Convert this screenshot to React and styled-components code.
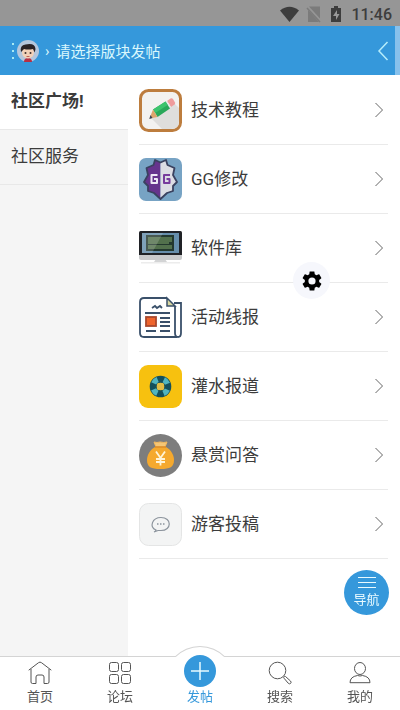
import React from "react";
import styled, { createGlobalStyle } from "styled-components";

const BLUE = "#3598db";

const boards = [
  { name: "技术教程", Icon: PencilIcon },
  { name: "GG修改", Icon: GuardianIcon },
  { name: "软件库", Icon: MonitorIcon },
  { name: "活动线报", Icon: NewspaperIcon },
  { name: "灌水报道", Icon: LifebuoyIcon },
  { name: "悬赏问答", Icon: MoneyBagIcon },
  { name: "游客投稿", Icon: ChatIcon },
];

const groups = ["社区广场!", "社区服务"];

function PencilIcon() {
  return (
    <BoardIcon viewBox="0 0 43 43" aria-hidden="true">
      <rect x="1.5" y="1.5" width="40" height="40" rx="8" fill="#f3f2f0" stroke="#bd7d3e" strokeWidth="3" />
      <path d="M12 29 35 14l5 5v13q0 8-8 8h-9z" fill="#dfdedc" />
      <path d="m28 12 3.500-2.500q1.500-.8 2.500.5l2 3.500q.5 1.200-.5 2L32 18z" fill="#ef9c9c" />
      <path d="m26.500 13.100 1.500-1.100 4 6-1.500 1.100z" fill="#e8e8e8" />
      <path d="m14 20.500 12.500-7.900 4.500 7L18.500 28z" fill="#2aa85a" />
      <path d="m14 20.500 12.500-7.900 2.200 3.400-12.500 8z" fill="#3cc46d" />
      <path d="M14 20.500 18.500 28 10.500 29.500z" fill="#dda56c" />
      <path d="m11.500 26 2 3-3.200 1z" fill="#3a4558" />
    </BoardIcon>
  );
}

function GuardianIcon() {
  return (
    <BoardIcon viewBox="0 0 43 43" strokeLinejoin="round" aria-hidden="true">
      <rect width="43" height="43" rx="7" fill="#77a3c4" />
      <path d="M21.500 4.500 16 2l-1.500 5L7.500 10 9 17l-4 7 4 4v5l6 2 6.500 6z" fill="#66348d" />
      <path d="M21.500 4.500 27 2l1.500 5 7 3-1.500 7 4 7-4 4v5l-6 2-6.500 6z" fill="#dcdde4" />
      <path
        d="M21.500 4.500 16 2l-1.500 5L7.500 10 9 17l-4 7 4 4v5l6 2 6.500 6 6.500-6 6-2v-5l4-4-4-7 1.500-7-7-3L27 2z"
        fill="none"
        stroke="#3a4260"
        strokeWidth="1.800"
      />
      <path d="M18.500 17h-6v8H18v-4h-3" fill="none" stroke="#eee8f5" strokeWidth="2" />
      <path d="M31 17h-6v8h5.500v-4h-3" fill="none" stroke="#773b9d" strokeWidth="2" />
    </BoardIcon>
  );
}

function MonitorIcon() {
  return (
    <BoardIcon viewBox="0 0 43 43" aria-hidden="true">
      <rect x="2" y="35" width="39" height="1.5" fill="#ececec" />
      <path d="m17 32-2 3h13l-2-3z" fill="#d3d4d5" />
      <rect y="4" width="43" height="26" rx="1.500" fill="#202226" />
      <path d="M0 28h43v3q0 2-2 2H2q-2 0-2-2z" fill="#c9cacb" />
      <rect x="3" y="6" width="37" height="20" fill="#668eab" />
      <rect x="7" y="8" width="28" height="16" fill="#23382e" />
      <path d="M9 10h24v5h-3v2H9zM9 18h24v4H9z" fill="#52704c" />
      <path d="M3 6h21L13 26H3z" fill="#fff" opacity=".17" />
    </BoardIcon>
  );
}

function NewspaperIcon() {
  return (
    <BoardIcon viewBox="0 0 43 43" fill="none" stroke="#3a506a" strokeWidth="1.800" aria-hidden="true">
      <path d="M28 2H5Q1 2 1 6v31q0 4 4 4h33" />
      <path d="M36 10v27q0 4 3 4 3 0 3-4V7h-7" />
      <path d="m28 2 8 8h-8z" fill="#d8d7a1" strokeWidth="1.500" />
      <path d="m13 12 3-2 2 2 3-2 2 2M6 17h25M21 22h10M21 26h10M21 30h10M7 35h10M21 35h10" />
      <rect x="7" y="21" width="10" height="9" fill="#ef642c" stroke="#a9482d" />
    </BoardIcon>
  );
}

function LifebuoyIcon() {
  return (
    <BoardIcon viewBox="0 0 43 43" aria-hidden="true">
      <rect width="43" height="43" rx="9" fill="#f7c10f" />
      <circle cx="21.500" cy="21.500" r="7.300" fill="none" stroke="#15505b" strokeWidth="7" />
      <circle
        cx="21.500"
        cy="21.500"
        r="7.500"
        fill="none"
        stroke="#51b5bf"
        strokeWidth="5.500"
        strokeDasharray="5.500 6.280"
        strokeDashoffset="-3.140"
      />
      <rect x="18" y="18" width="7" height="7" rx="1.500" fill="#e2bd45" />
    </BoardIcon>
  );
}

function MoneyBagIcon() {
  return (
    <BoardIcon viewBox="0 0 43 43" aria-hidden="true">
      <circle cx="21.500" cy="21.500" r="21.500" fill="#7d7d7d" />
      <path d="M16 13h11c5 3 8 8 8 13 0 7-4 9-13.500 9S8 33 8 26c0-5 3-10 8-13z" fill="#f5a92e" />
      <path d="M15 8q3 1 6 0 4 1 7 0l-2 5h-9z" fill="#f5c676" stroke="#f5b95c" strokeLinejoin="round" />
      <path d="M16 13h11" stroke="#db8a25" strokeWidth="1.500" />
      <path d="m17 17.500 4.500 6.500 4.500-6.500M21.500 24v7.500M17 25h9M17 28h9" fill="none" stroke="#fff4d7" strokeWidth="1.800" />
    </BoardIcon>
  );
}

function ChatIcon() {
  return (
    <BoardIcon viewBox="0 0 43 43" fill="none" aria-hidden="true">
      <rect x=".5" y=".5" width="42" height="42" rx="9" fill="#f3f4f4" stroke="#e4e5e5" />
      <path
        d="M17 27c-7-3-4-12.500 5-12.500 11 0 11 13 0 13h-3l-4 1.500q2-1 2-2z"
        stroke="#8c949d"
        strokeWidth="1.200"
      />
      <path d="M18 21h1.500M21 21h1.500M24 21h1.500" stroke="#8c949d" strokeWidth="1.500" />
    </BoardIcon>
  );
}

function StatusIcons() {
  return (
    <svg width="64" height="18" viewBox="0 0 64 18" aria-hidden="true">
      <path d="M1 5.500Q10.500-2 20 5.500L10.500 17z" fill="#3d3d3d" />
      <path d="m30 1.500 11 12v-12zM29 5v12h11z" fill="#7b7b7b" />
      <path d="m28 3 13 14" stroke="#7b7b7b" strokeWidth="1.500" />
      <path d="M52 3h3V1h4v2h3v14H52z" fill="#3d3d3d" />
      <path d="m58 5-4 6h3v4l3.500-6H58z" fill="#999" />
    </svg>
  );
}

function Avatar() {
  return (
    <svg width="22" height="22" viewBox="0 0 22 22" aria-hidden="true">
      <circle cx="11" cy="11" r="11" fill="#b5c6dc" />
      <path d="M7 22q0-4 4-4t4 4z" fill="#b82f43" />
      <ellipse cx="11" cy="12.500" rx="6" ry="6" fill="#f3d1b8" />
      <path d="M4 12Q2.500 5 8.500 4.500 18 2.500 18.500 9l-.8 3.500-1.700-3.500q-5 1-9 0z" fill="#2a2225" />
      <circle cx="8.500" cy="13" r="1" fill="#40302e" />
      <circle cx="13.500" cy="13" r="1" fill="#40302e" />
      <path d="M9.500 16.500h3" stroke="#bd6258" />
    </svg>
  );
}

function HomeIcon() {
  return (
    <TabIcon viewBox="0 0 24 24" aria-hidden="true">
      <path d="M.7 9.200 10.500 1.700q1.500-1.200 3 0l9.800 7.500M3 8v13q0 1.500 1.500 1.500H8V16q0-2 2-2h4q2 0 2 2v6.500h3.500Q21 22.500 21 21V8" />
    </TabIcon>
  );
}

function ForumIcon() {
  return (
    <TabIcon viewBox="0 0 24 24" aria-hidden="true">
      <rect x="1.500" y="1.500" width="9" height="9" rx="2" />
      <rect x="13.500" y="1.500" width="9" height="9" rx="2" />
      <rect x="1.500" y="13.500" width="9" height="9" rx="2" />
      <rect x="13.500" y="13.500" width="9" height="9" rx="2" />
    </TabIcon>
  );
}

function SearchIcon() {
  return (
    <TabIcon viewBox="0 0 24 24" aria-hidden="true">
      <circle cx="9.500" cy="9.500" r="8.300" />
      <path d="m17.500 15.500 5 4.500q1.200 1.300.1 2.400-1.100 1-2.400-.2L16 17.200q-.7-.9.100-1.600.7-.7 1.400-.1z" />
    </TabIcon>
  );
}

function UserIcon() {
  return (
    <TabIcon viewBox="0 0 24 24" aria-hidden="true">
      <ellipse cx="12" cy="7.500" rx="5.500" ry="6" />
      <path d="M2 21.700q0-6 7.500-7.200 2.500 1 5 0 7.500 1.200 7.500 7.200z" />
    </TabIcon>
  );
}

function App() {
  return (
    <Page>
      <GlobalStyle />
      <StatusBar>
        <StatusIcons />
        <Clock>11:46</Clock>
      </StatusBar>
      <Header>
        <Crumbs>
          <MenuButton aria-label="菜单">
            <svg width="4" height="18" viewBox="0 0 4 18" fill="#a8eaf3" aria-hidden="true">
              <rect x="1" y="1" width="2" height="2" />
              <rect x="1" y="8" width="2" height="2" />
              <rect x="1" y="15" width="2" height="2" />
            </svg>
            <Avatar />
          </MenuButton>
          <span>›</span>
          <Title>请选择版块发帖</Title>
        </Crumbs>
        <BackButton aria-label="返回">
          <svg width="12" height="20" viewBox="0 0 12 20" fill="none" aria-hidden="true">
            <path d="M10.500 1 2 10l8.500 9" stroke="#b5edfb" strokeWidth="1.500" />
          </svg>
        </BackButton>
      </Header>
      <Content>
        <Sidebar>
          {groups.map((name, i) => (
            <Group key={name} href="#" $active={i === 0}>
              {name}
            </Group>
          ))}
        </Sidebar>
        <BoardList>
          {boards.map(({ name, Icon }) => (
            <li key={name}>
              <Board href="#">
                <Icon />
                <BoardName>{name}</BoardName>
                <svg width="10" height="16" viewBox="0 0 10 16" fill="none" aria-hidden="true">
                  <path d="m1.500 1 7 7-7 7" stroke="#666" />
                </svg>
              </Board>
            </li>
          ))}
        </BoardList>
      </Content>
      <SettingsButton aria-label="设置">
        <svg width="24" height="24" viewBox="0 0 24 24" aria-hidden="true">
          <path d="M19.140 12.940c.04-.3.060-.61.060-.94 0-.32-.02-.64-.07-.94l2.030-1.580c.18-.14.230-.41.120-.61l-1.920-3.320c-.12-.22-.37-.29-.59-.22l-2.390.96c-.5-.38-1.030-.7-1.620-.94l-.36-2.540c-.04-.24-.24-.41-.48-.41h-3.840c-.24 0-.43.170-.47.410l-.36 2.540c-.59.240-1.130.57-1.620.94l-2.390-.96c-.22-.08-.47 0-.59.220L2.740 8.870c-.12.210-.08.470.12.610l2.030 1.580c-.05.3-.09.630-.09.940s.02.640.07.940l-2.030 1.580c-.18.140-.23.410-.12.610l1.920 3.320c.12.220.37.290.59.220l2.390-.96c.5.380 1.030.7 1.620.94l.36 2.540c.05.240.24.410.48.410h3.840c.24 0 .44-.17.470-.41l.36-2.540c.59-.24 1.130-.56 1.620-.94l2.390.96c.22.080.47 0 .59-.22l1.920-3.320c.12-.22.070-.47-.12-.61zM12 15.600A3.600 3.600 0 1 1 12 8.400a3.600 3.600 0 0 1 0 7.200z" />
        </svg>
      </SettingsButton>
      <NavButton>
        <svg width="18" height="12" viewBox="0 0 18 12" aria-hidden="true">
          <path d="M0 .5h18M0 5.500h18M0 10.500h18" stroke="#e8faff" />
        </svg>
        导航
      </NavButton>
      <TabBar>
        <Bump />
        <Tab href="#">
          <HomeIcon />
          首页
        </Tab>
        <Tab href="#">
          <ForumIcon />
          论坛
        </Tab>
        <Tab href="#" $active>
          <PostCircle>
            <svg width="20" height="20" viewBox="0 0 20 20" aria-hidden="true">
              <path d="M10 1v18M1 10h18" stroke="#e8faff" strokeWidth="1.500" />
            </svg>
          </PostCircle>
          发帖
        </Tab>
        <Tab href="#">
          <SearchIcon />
          搜索
        </Tab>
        <Tab href="#">
          <UserIcon />
          我的
        </Tab>
      </TabBar>
    </Page>
  );
}

const GlobalStyle = createGlobalStyle`
  * {
    box-sizing: border-box;
  }

  body {
    margin: 0;
    background: #fff;
    color: #3c3c3c;
    font-family: Roboto, "Noto Sans CJK SC", sans-serif;
  }

  a {
    color: inherit;
    text-decoration: none;
  }

  button {
    padding: 0;
    border: 0;
    background: none;
    color: inherit;
    font: inherit;
    cursor: pointer;
  }

  svg {
    display: block;
    flex: none;
  }
`;

const Page = styled.div`
  display: flex;
  flex-direction: column;
  min-height: 100vh;
`;

const StatusBar = styled.div`
  display: flex;
  align-items: center;
  justify-content: flex-end;
  gap: 8px;
  height: 26px;
  padding: 2px 8px 0;
  background: #969696;
`;

const Clock = styled.time`
  color: #3d3d3d;
  font-size: 16px;
  font-weight: 500;
`;

const Header = styled.header`
  display: flex;
  align-items: center;
  justify-content: space-between;
  height: 49px;
  padding: 0 6px 0 11px;
  border-right: 5px solid #87c1ec;
  background: ${BLUE};
  color: #d9f7fd;
  font-size: 15px;
`;

const Crumbs = styled.div`
  display: flex;
  align-items: center;
  gap: 6px;
`;

const MenuButton = styled.button`
  display: flex;
  align-items: center;
  gap: 2px;
`;

const Title = styled.h1`
  margin: 0;
  font-size: 15px;
  font-weight: 400;
`;

const BackButton = styled.button`
  display: flex;
`;

const Content = styled.main`
  display: flex;
  flex: 1;
  padding-bottom: 54px;
`;

const Sidebar = styled.nav`
  width: 32%;
  background: #f5f5f5;
`;

const Group = styled.a`
  display: block;
  height: 55px;
  padding: 0 11px;
  border-bottom: 1px solid #e8e8e8;
  background: ${(props) => (props.$active ? "#fff" : "transparent")};
  font-size: 17px;
  font-weight: ${(props) => (props.$active ? 700 : 400)};
  line-height: 53px;
`;

const BoardList = styled.ul`
  flex: 1;
  margin: 0;
  padding: 1px 12px 0 11px;
  list-style: none;
`;

const Board = styled.a`
  display: flex;
  align-items: center;
  gap: 9px;
  height: 69px;
  padding-right: 4px;
  border-bottom: 1px solid #eaeaea;
`;

const BoardIcon = styled.svg`
  width: 43px;
  height: 43px;
`;

const BoardName = styled.span`
  flex: 1;
  padding-bottom: 4px;
  font-size: 17px;
`;

const SettingsButton = styled.button`
  position: fixed;
  top: 262px;
  right: 70px;
  display: flex;
  align-items: center;
  justify-content: center;
  width: 37px;
  height: 37px;
  border-radius: 50%;
  background: #f6f7fc;
`;

const NavButton = styled.button`
  position: fixed;
  right: 11px;
  bottom: 95px;
  display: flex;
  flex-direction: column;
  align-items: center;
  justify-content: center;
  gap: 2px;
  width: 45px;
  height: 45px;
  border-radius: 50%;
  background: ${BLUE};
  color: #e8faff;
  font-size: 13px;
  line-height: 18px;
`;

const TabBar = styled.nav`
  position: fixed;
  right: 0;
  bottom: 0;
  left: 0;
  display: flex;
  height: 54px;
  border-top: 1px solid #d4d4d4;
  background: #fff;
`;

/* the arc that rises over the bar behind the post button */
const Bump = styled.span`
  position: absolute;
  top: -11px;
  left: 50%;
  width: 72px;
  height: 11px;
  overflow: hidden;
  transform: translateX(-50%);

  &::before {
    content: "";
    display: block;
    height: 72px;
    border: 1px solid #d4d4d4;
    border-radius: 50%;
    background: #fff;
  }
`;

const Tab = styled.a`
  position: relative;
  display: flex;
  flex: 1;
  flex-direction: column;
  align-items: center;
  justify-content: flex-end;
  padding-bottom: 3px;
  color: ${(props) => (props.$active ? BLUE : "#555")};
  font-size: 13px;
  line-height: 20px;
`;

const TabIcon = styled.svg`
  width: 24px;
  height: 24px;
  margin-bottom: 2px;
  fill: none;
  stroke: #555;
  stroke-width: 1;
`;

const PostCircle = styled.span`
  display: flex;
  flex: none;
  align-items: center;
  justify-content: center;
  width: 32px;
  height: 32px;
  border-radius: 50%;
  background: ${BLUE};
`;

export default App;
